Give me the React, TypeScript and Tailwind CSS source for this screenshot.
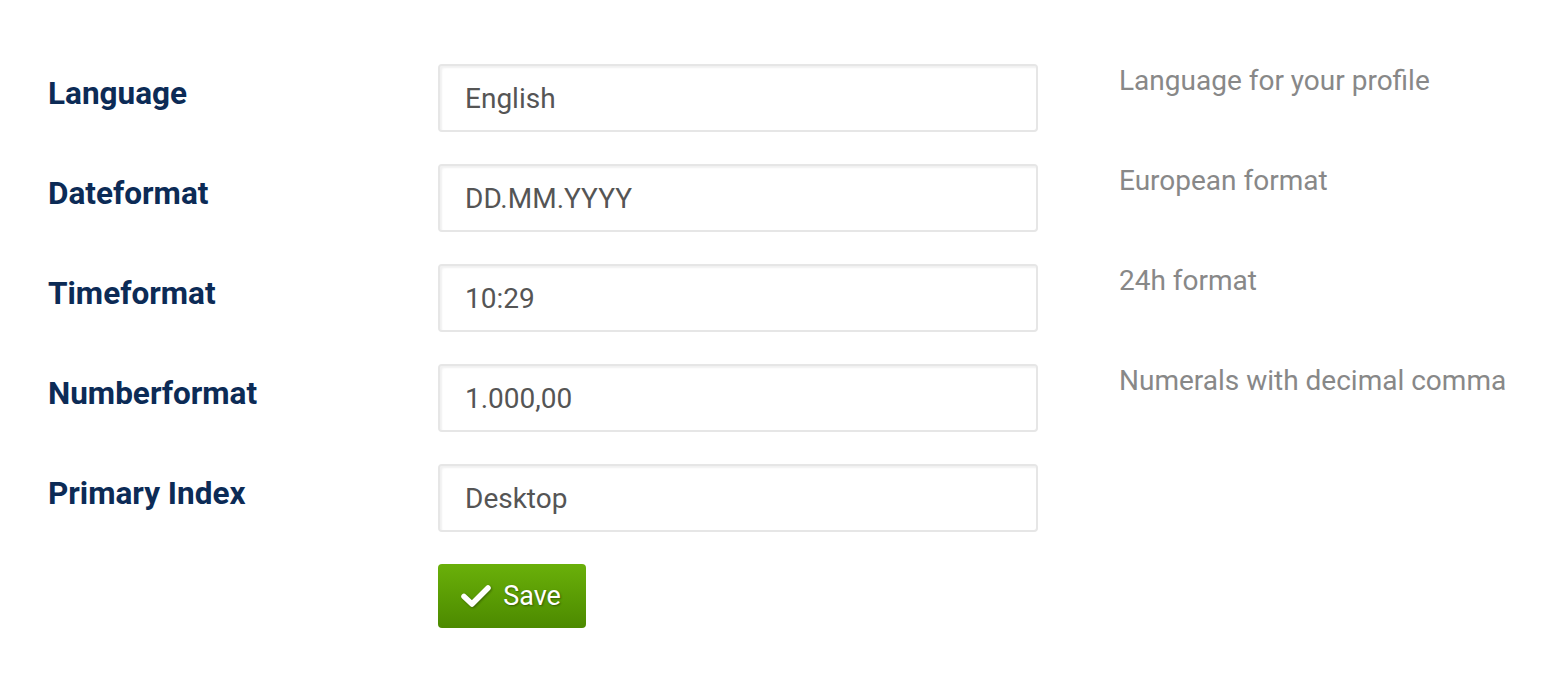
const rows = [
  { label: 'Language', value: 'English', help: 'Language for your profile' },
  { label: 'Dateformat', value: 'DD.MM.YYYY', help: 'European format' },
  { label: 'Timeformat', value: '10:29', help: '24h format' },
  { label: 'Numberformat', value: '1.000,00', help: 'Numerals with decimal comma' },
  { label: 'Primary Index', value: 'Desktop', help: '' },
];

function CheckIcon() {
  return (
    <svg width="30" height="24" viewBox="0 0 30 24" className="drop-shadow-[1px_1px_1px_rgba(0,0,0,0.35)]">
      <path d="M3 12.5 L11 20 L27 4" fill="none" stroke="#fff" strokeWidth="5.5" strokeLinecap="round" strokeLinejoin="round" />
    </svg>
  );
}

export default function App() {
  return (
    <div className="min-h-screen bg-white pl-12 pt-16 font-['Roboto',sans-serif]">
      <div className="flex flex-col gap-8">
        {rows.map((r) => (
          <div key={r.label} className="flex items-start">
            <div className="w-[390px] pt-[11px] text-[31.5px] font-bold leading-[38px] text-[#0c2b56]">
              {r.label}
            </div>
            <div className="flex h-[68px] w-[600px] items-center rounded-[4px] border-2 border-[#e6e6e6] px-[25px] pt-[1px] text-[28px] text-[#555] shadow-[inset_2px_2px_2px_rgba(0,0,0,0.06)]">
              {r.value}
            </div>
            <div className="pl-[81px] text-[28px] leading-[34px] text-[#888]">{r.help}</div>
          </div>
        ))}
        <div className="pl-[390px]">
          <button className="flex h-16 w-[148px] items-center justify-center gap-[12px] rounded-[4px] bg-gradient-to-b from-[#6ab00a] to-[#4c8a00] pr-[2px] text-[27px] text-white [text-shadow:1px_1px_2px_rgba(0,0,0,0.4)]">
            <CheckIcon />
            <span>Save</span>
          </button>
        </div>
      </div>
    </div>
  );
}
